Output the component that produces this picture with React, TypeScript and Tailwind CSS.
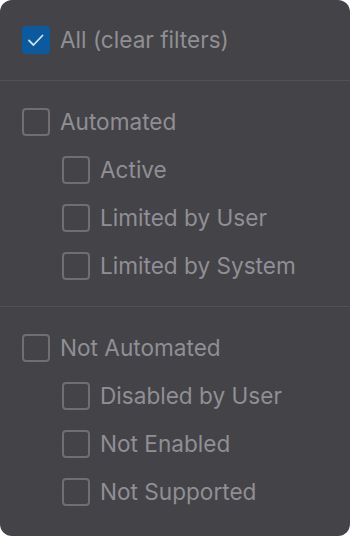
import React from "react";

function Box({ checked }: { checked?: boolean }) {
  if (checked) {
    return (
      <div className="w-[28px] h-[28px] rounded-[4px] bg-[#0b5a9e] flex items-center justify-center shrink-0">
        <svg width="20" height="20" viewBox="0 0 20 20" fill="none">
          <path d="M3 10.5l4.5 4.5 9-9.5" stroke="#cfe2f4" strokeWidth="1.8" strokeLinecap="round" strokeLinejoin="round" />
        </svg>
      </div>
    );
  }
  return <div className="w-[28px] h-[28px] rounded-[4px] border-2 border-[#6f6e73] shrink-0" />;
}

function Row({ label, checked, indent }: { label: string; checked?: boolean; indent?: boolean }) {
  return (
    <div className={`h-[48px] flex items-center gap-[10px] ${indent ? "pl-[62px]" : "pl-[22px]"}`}>
      <Box checked={checked} />
      <span className="text-[22.6px] text-[#908f94] leading-none">{label}</span>
    </div>
  );
}

export default function App() {
  return (
    <div className="w-[350px] h-[536px] bg-white" style={{ fontFamily: "Inter, 'Noto Sans', sans-serif" }}>
      <div className="w-full h-full bg-[#444348] rounded-[12px] overflow-hidden flex flex-col">
        <div className="pt-4 pb-4">
          <Row label="All (clear filters)" checked />
        </div>
        <div className="h-px bg-[#535257]" />
        <div className="pt-[17px] pb-4">
          <Row label="Automated" />
          <Row label="Active" indent />
          <Row label="Limited by User" indent />
          <Row label="Limited by System" indent />
        </div>
        <div className="h-px bg-[#535257]" />
        <div className="pt-[17px] pb-4">
          <Row label="Not Automated" />
          <Row label="Disabled by User" indent />
          <Row label="Not Enabled" indent />
          <Row label="Not Supported" indent />
        </div>
      </div>
    </div>
  );
}
